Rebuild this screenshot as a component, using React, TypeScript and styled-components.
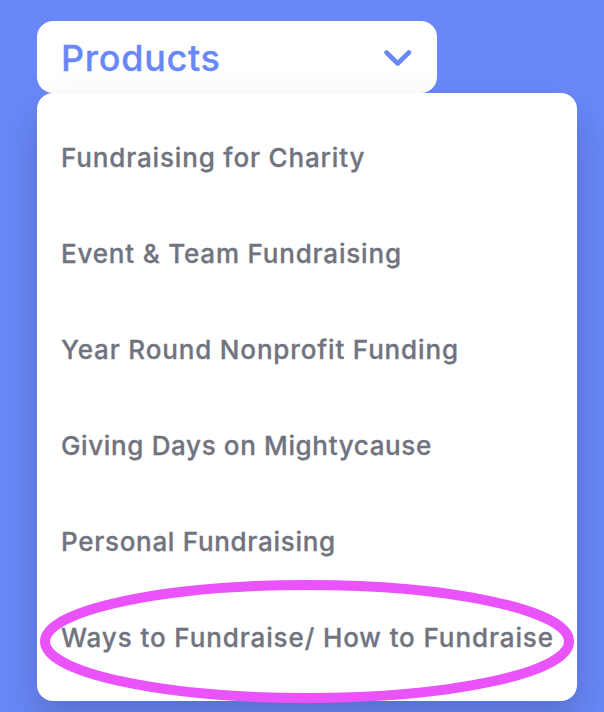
import styled, { createGlobalStyle } from "styled-components";

const menuItems = [
    { label: "Fundraising for Charity", tracking: 0.84 },
    { label: "Event & Team Fundraising", tracking: 0.81 },
    { label: "Year Round Nonprofit Funding", tracking: 0.84 },
    { label: "Giving Days on Mightycause", tracking: 0.64 },
    { label: "Personal Fundraising", tracking: 0.7 },
    { label: "Ways to Fundraise/ How to Fundraise", tracking: 0.89, highlighted: true },
];

const App = () => {
    return (
        <Page>
            <GlobalStyle />
            <MenuButton type="button">
                <MenuTitle>Products</MenuTitle>
                <Chevron viewBox="0 0 28 18" fill="none">
                    <path d="M2.5 2.5L13.7 13.5L24.9 2.5" />
                </Chevron>
            </MenuButton>
            <MenuPanel>
                {menuItems.map((item) => (
                    <MenuItem key={item.label}>
                        <MenuLink href="#" $tracking={item.tracking}>{item.label}</MenuLink>
                        {item.highlighted && (
                            <Highlight viewBox="0 0 534 123" fill="none">
                                <ellipse cx="267" cy="61.5" rx="262" ry="56.5" />
                            </Highlight>
                        )}
                    </MenuItem>
                ))}
            </MenuPanel>
        </Page>
    );
};

export default App;

const GlobalStyle = createGlobalStyle`
    * {
        box-sizing: border-box;
    }

    body {
        margin: 0;
        background: #6988f7;
        font-family: Inter, Lato, sans-serif;
    }
`;

const Page = styled.main`
    width: 604px;
    height: 712px;
    padding: 21px 27px 0 37px;
    overflow: hidden;
    background: #6988f7;
`;

const MenuButton = styled.button`
    display: flex;
    align-items: center;
    justify-content: space-between;
    width: 400px;
    height: 72px;
    padding: 4px 25px 0 24px;
    border: 0;
    border-radius: 16px;
    background: #fff;
    color: #6988f7;
    font-family: inherit;
`;

const MenuTitle = styled.span`
    padding-bottom: 2px;
    font-size: 36px;
    font-weight: 500;
    line-height: 46px;
    letter-spacing: 0.7px;
    -webkit-text-stroke: 0.3px currentColor;
`;

const Chevron = styled.svg`
    width: 28px;
    height: 18px;
    stroke: currentColor;
    stroke-width: 4.6;
    stroke-linecap: round;
    stroke-linejoin: round;
`;

const MenuPanel = styled.ul`
    position: relative;
    width: 540px;
    height: 608px;
    margin: 0;
    padding: 17px 0 15px;
    border-radius: 16px;
    background: #fff;
    box-shadow: 0 20px 40px rgba(0, 0, 0, 0.18);
    list-style: none;
`;

const MenuItem = styled.li`
    position: relative;
    display: flex;
    align-items: center;
    height: 96px;
    padding: 0 24px;
`;

const MenuLink = styled.a<{ $tracking: number }>`
    color: #71747f;
    font-size: 26px;
    font-weight: 500;
    line-height: 36px;
    letter-spacing: ${({ $tracking }) => $tracking}px;
    white-space: nowrap;
    text-decoration: none;
    -webkit-text-stroke: 0.3px currentColor;
`;

const Highlight = styled.svg`
    position: absolute;
    top: -10px;
    left: 3px;
    width: 534px;
    height: 123px;
    stroke: #e953f9;
    stroke-width: 10;
    pointer-events: none;
`;
